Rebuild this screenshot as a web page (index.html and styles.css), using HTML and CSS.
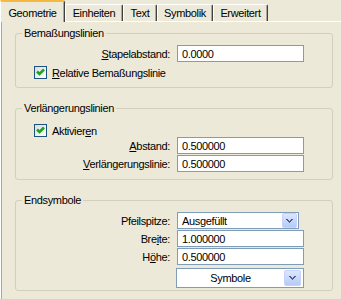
FILE: index.html
```html
<!DOCTYPE html>
<html lang="de">
<head>
    <meta charset="UTF-8">
    <title>Bemaßungsstil</title>
    <link rel="stylesheet" href="styles.css">
</head>
<body>
    <div class="sheet">
        <div class="tabs">
            <div class="tab tab-active tab-geo">Geometrie</div>
            <div class="tab tab-units">Einheiten</div>
            <div class="tab tab-text">Text</div>
            <div class="tab tab-sym">Symbolik</div>
            <div class="tab tab-ext">Erweitert</div>
        </div>

        <div class="page">
            <fieldset class="group group-dim">
                <legend>Bemaßungslinien</legend>
                <div class="row">
                    <label class="lbl"><u>S</u>tapelabstand:</label>
                    <input class="field" type="text" value="0.0000">
                </div>
                <label class="check">
                    <span class="box">
                        <svg width="13" height="13" viewBox="0 0 13 13"><path d="M3 5.5l2.5 2.5L10 3.5" fill="none" stroke="#21a121" stroke-width="2.6"/></svg>
                    </span>
                    <span><u>R</u>elative Bemaßungslinie</span>
                </label>
            </fieldset>

            <fieldset class="group group-ext">
                <legend>Verlängerungslinien</legend>
                <label class="check">
                    <span class="box">
                        <svg width="13" height="13" viewBox="0 0 13 13"><path d="M3 5.5l2.5 2.5L10 3.5" fill="none" stroke="#21a121" stroke-width="2.6"/></svg>
                    </span>
                    <span>Aktivier<u>e</u>n</span>
                </label>
                <div class="row">
                    <label class="lbl"><u>A</u>bstand:</label>
                    <input class="field" type="text" value="0.500000">
                </div>
                <div class="row">
                    <label class="lbl"><u>V</u>erlängerungslinie:</label>
                    <input class="field" type="text" value="0.500000">
                </div>
            </fieldset>

            <fieldset class="group group-end">
                <legend>Endsymbole</legend>
                <div class="row">
                    <label class="lbl">Pfeilspitze:</label>
                    <div class="combo">
                        <span class="combo-text">Ausgefüllt</span>
                        <span class="drop">
                            <svg width="7" height="4" viewBox="0 0 7 4"><path d="M0 0h2v1H0zM5 0h2v1H5zM1 1h2v1H1zM4 1h2v1H4zM2 2h3v1H2zM3 3h1v1H3z" fill="#4d6185"/></svg>
                        </span>
                    </div>
                </div>
                <div class="row">
                    <label class="lbl">Bre<u>i</u>te:</label>
                    <input class="field" type="text" value="1.000000">
                </div>
                <div class="row">
                    <label class="lbl">H<u>ö</u>he:</label>
                    <input class="field" type="text" value="0.500000">
                </div>
                <div class="row row-sym">
                    <span></span>
                    <div class="combo combo-wide">
                        <span class="combo-text">Symbole</span>
                        <span class="drop">
                            <svg width="7" height="4" viewBox="0 0 7 4"><path d="M0 0h2v1H0zM5 0h2v1H5zM1 1h2v1H1zM4 1h2v1H4zM2 2h3v1H2zM3 3h1v1H3z" fill="#4d6185"/></svg>
                        </span>
                    </div>
                </div>
            </fieldset>
        </div>
    </div>
</body>
</html>
```

FILE: styles.css
```css
body {
    margin: 0;
    background: #ece9d8;
    font-family: "Liberation Sans", Arial, sans-serif;
    font-size: 11px;
    letter-spacing: -0.35px;
    color: #000;
    overflow: hidden;
}

.sheet {
    width: 341px;
    height: 299px;
}

/* tab strip */
.tabs {
    display: flex;
    align-items: flex-end;
    height: 21px;
    position: relative;
    z-index: 1;
}

.tab {
    box-sizing: border-box;
    height: 17px;
    padding-top: 1px;
    line-height: 14px;
    text-align: center;
    white-space: nowrap;
    border-top: 1px solid #fff;
    border-left: 1px solid #fff;
    border-right: 1px solid #404040;
    border-top-right-radius: 2px;
    box-shadow: inset -1px 0 #aca899;
}

.tab-active {
    height: 22px;
    margin-bottom: -1px;
    padding-top: 4px;
    border-top: 2px solid #f5b93f;
    background: #ece9d8;
}

.tab-geo { width: 65px; }
.tab-units { width: 58px; }
.tab-text { width: 34px; }
.tab-sym { width: 56px; }
.tab-ext { width: 55px; }

/* page body */
.page {
    box-sizing: border-box;
    height: 278px;
    padding: 5px 0 0 14px;
    border-top: 1px solid #fff;
    border-left: 1px solid #fff;
    box-shadow: inset 1px 0 #aca899;
}

.group {
    box-sizing: border-box;
    width: 318px;
    min-width: 0;
    margin: 0 0 14px;
    padding: 0;
    border: 1px solid #d0d0bf;
    border-radius: 3px;
}

.group legend {
    margin-left: 6px;
    padding: 0 2px;
    line-height: 13px;
}

.group-dim { padding-bottom: 8px; }
.group-ext { padding-bottom: 7px; }
.group-end { padding-bottom: 2px; }

.row {
    display: grid;
    grid-template-columns: 161px 127px;
    align-items: center;
    margin-top: 1px;
}

.group legend + .row {
    margin-top: 5px;
}

.row-sym {
    margin-top: 3px;
}

.lbl {
    text-align: right;
    padding-right: 7px;
    white-space: nowrap;
}

.field {
    box-sizing: border-box;
    width: 127px;
    height: 17px;
    margin: 0;
    padding: 0 4px;
    border: 1px solid #7f9db9;
    background: #fff;
    font: inherit;
    letter-spacing: inherit;
    color: #000;
    outline: none;
}

/* checkbox rows */
.check {
    display: flex;
    align-items: center;
    gap: 5px;
    height: 13px;
    padding-left: 18px;
}

.group-dim .check { margin-top: 4px; }
.group-ext .check { margin-top: 9px; margin-bottom: -1px; }

.box {
    box-sizing: border-box;
    width: 13px;
    height: 13px;
    border: 1px solid #1c5180;
    background: linear-gradient(135deg, #dcdcd7, #fff);
    display: flex;
}

.box svg {
    margin: -1px;
}

/* combo boxes */
.combo {
    box-sizing: border-box;
    display: flex;
    align-items: center;
    width: 122px;
    height: 17px;
    padding-left: 4px;
    border: 1px solid #7f9db9;
    background: #fff;
}

.combo-text {
    flex: 1;
    white-space: nowrap;
}

.drop {
    box-sizing: border-box;
    display: flex;
    align-items: center;
    justify-content: center;
    width: 15px;
    height: 15px;
    margin-right: 1px;
    border: 1px solid #c3d3fd;
    border-radius: 2px;
    background: linear-gradient(#dce6fd, #b6cbf7);
}

.combo-wide {
    width: 128px;
    height: 20px;
    margin-left: -1px;
    padding-left: 0;
}

.combo-wide .combo-text {
    text-align: center;
}

.combo-wide .drop {
    width: 17px;
    height: 16px;
    margin-right: 2px;
}
```
